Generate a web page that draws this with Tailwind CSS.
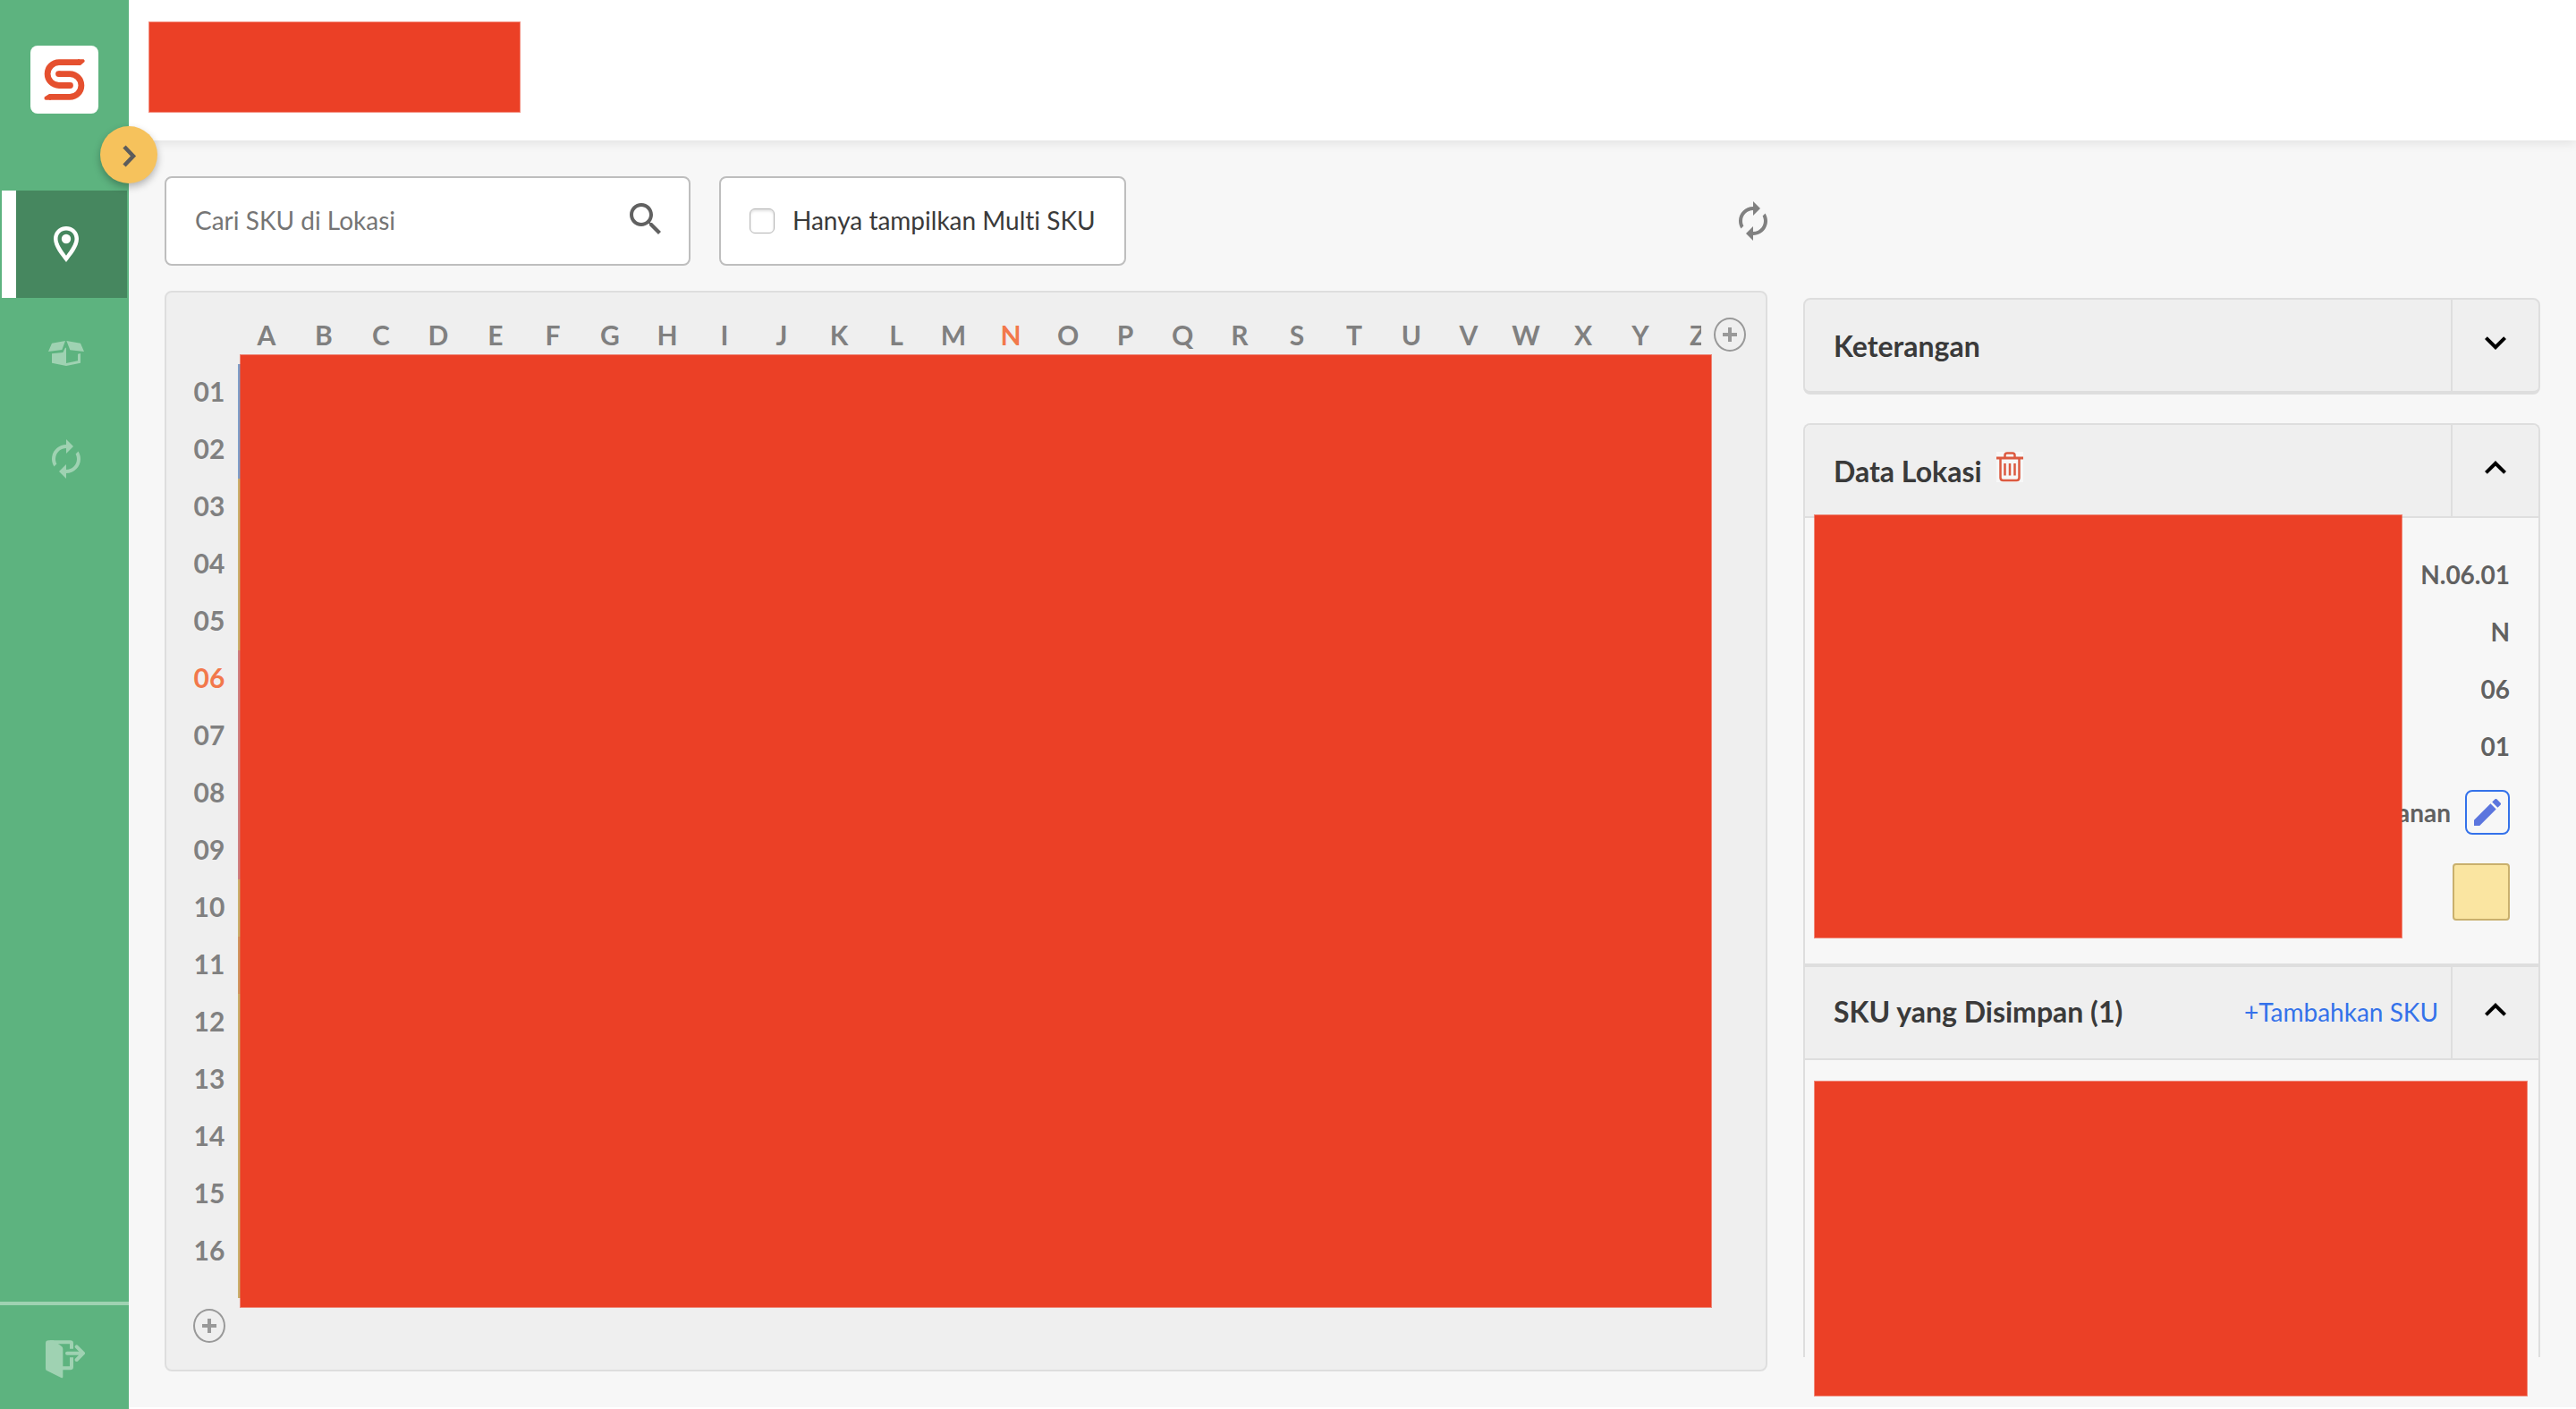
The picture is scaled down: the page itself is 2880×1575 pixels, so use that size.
<!DOCTYPE html>
<html lang="id">
<head>
<meta charset="utf-8">
<title>Lokasi Gudang</title>
<script src="https://cdn.jsdelivr.net/npm/@tailwindcss/browser@4"></script>
</head>
<body class="flex min-h-screen bg-white font-['Lato','Noto_Sans',sans-serif] text-[28px] leading-9 text-[#3a3a3a] [font-variant-ligatures:no-common-ligatures]">

<aside class="sticky top-0 z-10 flex h-screen w-36 shrink-0 flex-col bg-[#5db37f]">
  <a href="#" aria-label="Beranda" class="mx-auto mt-[51px] flex size-[76px] items-center justify-center rounded-lg bg-white">
    <svg class="size-[46px]" viewBox="0 0 46 46" fill="none" stroke="#e5502f" stroke-width="6.8">
      <path d="M40 3.7H17A12.9 12.9 0 0 0 17 29.5H29.5"/>
      <path d="M16.500 16.600H29A12.900 12.900 0 0 1 29 42.400H6"/>
      <circle cx="29.500" cy="29.500" r="3.400" fill="#e5502f" stroke="none"/>
      <circle cx="16.500" cy="16.600" r="3.400" fill="#e5502f" stroke="none"/>
      <path d="M38 .3H44.500Q46 .8 45.600 3L41 7.100H38zM8 39H6L.6 42.500Q0 45 2 45.800H8z" fill="#e5502f" stroke="none"/>
    </svg>
  </a>
  <button aria-label="Buka menu" class="absolute -right-8 top-[141px] flex size-16 items-center justify-center rounded-full bg-[#f6c25c] shadow-[0_4px_8px_rgba(0,0,0,0.28)]">
    <svg class="size-8" viewBox="0 0 32 32" fill="none" stroke="#5c5c5c" stroke-width="4.500"><path d="M11 7L21 17.500L11 28"/></svg>
  </button>
  <nav class="mt-[86px] flex flex-col px-0.5">
    <a href="#" aria-label="Lokasi" class="flex h-[120px] items-center justify-center border-l-16 border-white bg-[#46875f] pr-3">
      <svg class="h-10 w-7" viewBox="0 0 28 40"><path fill="#fff" fill-rule="evenodd" d="M14 0C6 0 0 6 0 14c0 9 8 18 14 26 6-8 14-17 14-26C28 6 22 0 14 0zM14 4.500C19.500 4.500 23.500 8.500 23.500 14c0 5.500-5 12.500-9.500 18.700C9.500 26.500 4.500 19.500 4.500 14 4.500 8.500 8.500 4.500 14 4.500z"/><circle cx="14" cy="14" r="5.200" fill="#fff"/></svg>
    </a>
    <a href="#" aria-label="Produk" class="flex h-[124px] items-center justify-center pl-1">
      <svg class="h-7 w-10" viewBox="162 183 120 84" fill="#9fd2b2"><path d="M174 191L219 183L208 213L162 219zM223 183L270 191L282 219L235 214zM174 226L211 222L219 206H222V267L174 257z"/><path d="M222 258L261 250V227L270 225V257L222 267z"/></svg>
    </a>
    <a href="#" aria-label="Sinkronisasi" class="flex h-28 items-center justify-center pl-1">
      <svg class="size-12" viewBox="0 0 24 24" fill="#9fd2b2"><path d="M12 6v3l4-4-4-4v3c-4.420 0-8 3.580-8 8 0 1.570.46 3.030 1.240 4.260L6.700 14.800c-.45-.83-.7-1.790-.7-2.800 0-3.310 2.690-6 6-6zm6.760 1.740L17.300 9.200c.44.84.7 1.790.7 2.800 0 3.310-2.690 6-6 6v-3l-4 4 4 4v-3c4.420 0 8-3.580 8-8 0-1.570-.46-3.030-1.240-4.260z"/></svg>
    </a>
  </nav>
  <a href="#" aria-label="Keluar" class="mt-auto flex h-[120px] items-center justify-center border-t-4 border-[#9fd2b2] pl-0.5 pt-1">
    <svg class="size-11" viewBox="156 290 132 132" fill="none" stroke="#9fd2b2" stroke-width="12">
      <path d="M166 294H182L209 313Q214 316 214 322V416Q214 422 208 419L161 396Q156 394 156 388V304Q156 294 166 294z" fill="#9fd2b2" stroke="none"/>
      <path d="M170 300H239Q243 300 243 304V322M243 351V383Q243 387 239 387H212"/>
      <path d="M228 337H278M260 315L282 337L260 359" stroke-linecap="round" stroke-linejoin="round"/>
    </svg>
  </a>
</aside>

<div class="min-w-0 grow">
  <header class="relative h-[157px] bg-white px-[22px] pt-6 shadow-[0_2px_12px_rgba(0,0,0,0.10)]">
    <div class="h-[102px] w-[416px] border border-[#eb4026]/60 bg-[#eb4026] bg-clip-padding"></div>
  </header>

  <main class="grid grid-cols-[minmax(0,1fr)_824px] gap-10 bg-[#f7f7f7] p-10">
    <section>
      <div class="flex items-center">
        <div class="flex h-[100px] w-[588px] items-center rounded-lg border-2 border-[#bebebe] bg-white pl-8 pr-6">
          <input type="search" aria-label="Cari SKU di Lokasi" placeholder="Cari SKU di Lokasi" class="min-w-0 grow bg-transparent pb-0.5 outline-none placeholder:text-[#757575]">
          <button aria-label="Cari" class="-mt-1"><svg class="block size-12" viewBox="0 0 24 24" fill="#616161"><path d="M15.500 14h-.79l-.28-.27C15.410 12.590 16 11.110 16 9.500 16 5.910 13.090 3 9.500 3S3 5.910 3 9.500 5.910 16 9.500 16c1.610 0 3.090-.59 4.230-1.570l.27.28v.79l5 4.990L20.490 19l-4.990-5zm-6 0C7.010 14 5 11.990 5 9.500S7.010 5 9.500 5 14 7.010 14 9.500 11.990 14 9.500 14z"/></svg></button>
        </div>
        <label class="ml-8 flex h-[100px] items-center gap-5 rounded-lg border-2 border-[#bebebe] bg-white px-8">
          <input type="checkbox" class="size-7 appearance-none rounded-md border border-[#b4b4b4] bg-white shadow-[inset_0_2px_3px_rgba(0,0,0,0.12)]">
          <span class="pb-0.5">Hanya tampilkan Multi SKU</span>
        </label>
        <button aria-label="Muat ulang" class="-mr-2 ml-auto"><svg class="block size-12" viewBox="0 0 24 24" fill="#808080"><path d="M12 6v3l4-4-4-4v3c-4.420 0-8 3.580-8 8 0 1.570.46 3.030 1.240 4.260L6.700 14.800c-.45-.83-.7-1.790-.7-2.800 0-3.310 2.690-6 6-6zm6.760 1.740L17.300 9.200c.44.84.7 1.790.7 2.800 0 3.310-2.690 6-6 6v-3l-4 4 4 4v-3c4.420 0 8-3.580 8-8 0-1.570-.46-3.030-1.240-4.260z"/></svg></button>
      </div>

      <div class="mt-7 rounded-lg border-2 border-[#dedede] bg-[#efefef] pb-[30px] pl-4 pr-[22px] pt-4 text-[30px] font-bold text-[#808080]">
        <div class="mb-0.5 flex h-[62px] items-center">
          <div class="ml-16 flex min-w-0 grow overflow-hidden text-center">
            <span class="w-16 shrink-0">A</span><span class="w-16 shrink-0">B</span><span class="w-16 shrink-0">C</span><span class="w-16 shrink-0">D</span><span class="w-16 shrink-0">E</span><span class="w-16 shrink-0">F</span><span class="w-16 shrink-0">G</span><span class="w-16 shrink-0">H</span><span class="w-16 shrink-0">I</span><span class="w-16 shrink-0">J</span><span class="w-16 shrink-0">K</span><span class="w-16 shrink-0">L</span><span class="w-16 shrink-0">M</span><span class="w-16 shrink-0 text-[#f2784b]">N</span><span class="w-16 shrink-0">O</span><span class="w-16 shrink-0">P</span><span class="w-16 shrink-0">Q</span><span class="w-16 shrink-0">R</span><span class="w-16 shrink-0">S</span><span class="w-16 shrink-0">T</span><span class="w-16 shrink-0">U</span><span class="w-16 shrink-0">V</span><span class="w-16 shrink-0">W</span><span class="w-16 shrink-0">X</span><span class="w-16 shrink-0">Y</span><span class="w-16 shrink-0">Z</span>
          </div>
          <button aria-label="Tambah kolom" class="ml-3.5 flex h-[38px] w-9 shrink-0 items-center justify-center rounded-[50%] border-2 border-[#999]">
            <svg class="size-4" viewBox="0 0 16 16" stroke="#999" stroke-width="4"><path d="M0 8H16M8 0V16"/></svg>
          </button>
        </div>
        <div class="flex">
          <div class="-mt-0.5 grid w-16 shrink-0 auto-rows-[64px] content-start items-center text-center leading-9">
            <span>01</span><span>02</span><span>03</span><span>04</span><span>05</span><span class="text-[#f2784b]">06</span><span>07</span><span>08</span><span>09</span><span>10</span><span>11</span><span>12</span><span>13</span><span>14</span><span>15</span><span>16</span>
          </div>
          <div class="relative mb-3 h-[1044px] grow">
            <div class="h-32 bg-[#7f9fc9]"></div>
            <div class="h-48 bg-[#c9b06d]"></div>
            <div class="h-64 bg-[#cf7f80]"></div>
            <div class="h-16 bg-[#c9b06d]"></div>
            <div class="h-16 bg-[#d09560]"></div>
            <div class="h-[340px] bg-[#c9b06d]"></div>
            <div class="absolute -bottom-[11px] -right-3 -top-[11px] left-0.5 border border-[#eb4026]/60 bg-[#eb4026] bg-clip-padding"></div>
          </div>
          <div class="w-[50px] shrink-0"></div>
        </div>
        <button aria-label="Tambah baris" class="ml-3.5 flex h-[38px] w-9 items-center justify-center rounded-[50%] border-2 border-[#999]">
          <svg class="size-4" viewBox="0 0 16 16" stroke="#999" stroke-width="4"><path d="M0 8H16M8 0V16"/></svg>
        </button>
      </div>
    </section>

    <aside class="pt-[136px]">
      <section class="overflow-hidden rounded-lg border-2 border-b-4 border-[#dedede] bg-[#efefef]">
        <div class="flex h-[102px]">
          <h2 class="flex grow items-center pl-8 pt-0.5 text-[32px] font-bold">Keterangan</h2>
          <button aria-label="Buka Keterangan" class="flex w-[98px] items-center justify-center border-l-2 border-[#dedede] pb-1.5">
            <svg class="size-12" viewBox="0 0 24 24" fill="#000"><path d="M16.590 8.590L12 13.170 7.410 8.590 6 10l6 6 6-6z"/></svg>
          </button>
        </div>
      </section>

      <section class="relative mt-8 rounded-t-lg border-x-2 border-t-2 border-[#dedede]">
        <div class="flex h-[104px] rounded-t-md border-b-2 border-[#dedede] bg-[#efefef]">
          <div class="flex grow items-center pl-8 pt-0.5">
            <h2 class="text-[32px] font-bold">Data Lokasi</h2>
            <button aria-label="Hapus lokasi" class="-mt-2.5 ml-4 bg-[#f7f7f7]">
              <svg class="block h-[34px] w-[30px]" viewBox="0 0 30 34" fill="none" stroke="#dc5a40" stroke-width="2.500"><path d="M0 7H30" stroke-width="3"/><path d="M9.500 6V4Q9.500 1.500 12 1.500H18Q20.500 1.500 20.500 4V6M4.500 8V29Q4.500 32 7.500 32H22.500Q25.500 32 25.500 29V8M9.500 13V26.500M15 13V26.500M20.500 13V26.500"/></svg>
            </button>
          </div>
          <button aria-label="Tutup Data Lokasi" class="flex w-[98px] items-center justify-center border-l-2 border-[#dedede] pb-1.5">
            <svg class="size-12" viewBox="0 0 24 24" fill="#000"><path d="M12 8l-6 6 1.410 1.410L12 10.830l4.590 4.580L18 14z"/></svg>
          </button>
        </div>
        <div class="relative flex flex-col items-end pb-12 pr-8 pt-8 font-bold text-[#616161]">
          <div class="flex h-16 items-center pb-0.5">N.06.01</div>
          <div class="flex h-16 items-center pb-0.5">N</div>
          <div class="flex h-16 items-center pb-0.5">06</div>
          <div class="flex h-16 items-center pb-0.5">01</div>
          <div class="mb-4 flex h-[82px] items-center gap-4">
            <span>anan</span>
            <button aria-label="Ubah" class="flex size-[50px] items-center justify-center rounded-lg border-2 border-[#3472ea]">
              <svg class="size-10" viewBox="0 0 24 24" fill="#5b75de"><path d="M3 17.250V21h3.750L17.810 9.940l-3.750-3.750L3 17.250zM20.710 7.040c.39-.39.39-1.020 0-1.410l-2.340-2.340c-.39-.39-1.020-.39-1.410 0l-1.830 1.830 3.750 3.750 1.830-1.830z"/></svg>
            </button>
          </div>
          <div class="size-16 rounded border-2 border-[#c9b06d] bg-[#fae5a1]"></div>
          <div class="absolute -top-1 bottom-7 left-2.5 right-[152px] border border-[#eb4026]/60 bg-[#eb4026] bg-clip-padding"></div>
        </div>
        <div class="flex h-[108px] border-b-2 border-t-4 border-[#dedede] bg-[#efefef]">
          <div class="flex grow items-center justify-between pb-0.5 pl-8 pr-3.5">
            <h2 class="text-[32px] font-bold">SKU yang Disimpan (1)</h2>
            <a href="#" class="text-[#3472ea]">+Tambahkan SKU</a>
          </div>
          <button aria-label="Tutup SKU yang Disimpan" class="flex w-[98px] items-center justify-center border-l-2 border-[#dedede] pb-1.5">
            <svg class="size-12" viewBox="0 0 24 24" fill="#000"><path d="M12 8l-6 6 1.410 1.410L12 10.830l4.590 4.580L18 14z"/></svg>
          </button>
        </div>
        <div class="relative h-[332px]">
          <div class="absolute -bottom-11 left-2.5 right-3 top-[23px] border border-[#eb4026]/60 bg-[#eb4026] bg-clip-padding"></div>
        </div>
      </section>
    </aside>
  </main>
</div>
</body>
</html>
